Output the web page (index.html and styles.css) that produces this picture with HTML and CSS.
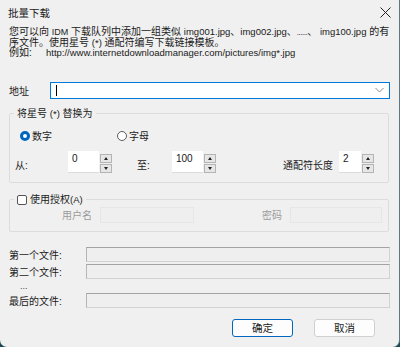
FILE: index.html
```html
<html>

<head>
  <title>批量下载</title>
  <link rel="stylesheet" href="styles.css">
</head>

<body>
  <div class="window">
    <header class="titlebar">
      <span class="title">批量下载</span>
      <svg class="close" width="11" height="11" viewBox="0 0 11 11">
        <path d="M0.5 0.5L10.5 10.5M10.5 0.5L0.5 10.5" />
      </svg>
    </header>

    <main class="content">
      <p class="desc">
        <span class="line">您可以向 <span class="idm">IDM</span> 下载队列中添加一组类似 <span class="en">img001.jpg</span>、<span class="en">img002.jpg</span>、<span class="ell">......</span>、 <span class="en">img100.jpg</span> 的有</span>
        <span class="line">序文件。使用星号 <span class="en">(*)</span> 通配符编写下载链接模板。</span>
        <span class="line"><span class="eg">例如:</span><span class="en">http://www.internetdownloadmanager.com/pictures/img*.jpg</span></span>
      </p>

      <div class="addr-row">
        <label>地址</label>
        <div class="combo">
          <span class="caret"></span>
          <svg class="chevron" width="9" height="6" viewBox="0 0 9 6">
            <path d="M0.5 1L4.5 5L8.5 1" />
          </svg>
        </div>
      </div>

      <fieldset class="group group-replace">
        <legend>将星号 <span class="en">(*)</span> 替换为</legend>
        <div class="radio-row">
          <span class="radio checked">数字</span>
          <span class="radio">字母</span>
        </div>
        <div class="spin-row">
          <label class="lbl-from">从:</label>
          <div class="spin spin-from">
            <span class="spin-value">0</span>
            <span class="spin-btns"><i class="up"></i><i class="down"></i></span>
          </div>
          <label class="lbl-to">至:</label>
          <div class="spin spin-to">
            <span class="spin-value">100</span>
            <span class="spin-btns"><i class="up"></i><i class="down"></i></span>
          </div>
          <label class="lbl-len">通配符长度</label>
          <div class="spin spin-len">
            <span class="spin-value">2</span>
            <span class="spin-btns"><i class="up"></i><i class="down"></i></span>
          </div>
        </div>
      </fieldset>

      <fieldset class="group group-auth">
        <legend><span class="check"></span>使用授权<span class="en">(A)</span></legend>
        <div class="auth-row">
          <label class="lbl-user">用户名</label>
          <span class="field-off user"></span>
          <label class="lbl-pass">密码</label>
          <span class="field-off pass"></span>
        </div>
      </fieldset>

      <div class="files">
        <label>第一个文件:</label>
        <span class="field-ro"></span>
        <label>第二个文件:</label>
        <span class="field-ro"></span>
        <span class="dots">...</span>
        <span></span>
        <label>最后的文件:</label>
        <span class="field-ro"></span>
      </div>

      <div class="buttons">
        <button class="btn default">确定</button>
        <button class="btn">取消</button>
      </div>
    </main>
  </div>
</body>

</html>
```

FILE: styles.css
```css
:root {
  --bg: #f0f0f0;
  --text: #1a1a1a;
  --muted: #9b9b9b;
  --accent: #0067c0;
  --group-line: #dcdcdc;
}

body {
  margin: 0;
  background-color: #1c4756;
  font-family: "Liberation Sans", "Noto Sans CJK SC", sans-serif;
  font-size: 10px;
  color: var(--text);
}

.en {
  font-size: 9.5px;
}

.window {
  width: 399px;
  height: 347px;
  background-color: var(--bg);
  border-right: 1px solid #5d7883;
  border-radius: 0 0 7px 7px;
  overflow: hidden;
}

.titlebar {
  display: flex;
  align-items: center;
  justify-content: space-between;
  height: 24px;
  padding: 0 8px 0 8px;
}

.title {
  font-size: 10.5px;
}

.close {
  stroke: #222;
  stroke-width: 1;
  fill: none;
}

.content {
  padding: 0 9px 0 9px;
}

.desc {
  margin: 3px 0 0 0;
  line-height: 10.5px;
}

.desc .line {
  display: block;
  white-space: nowrap;
  height: 10.5px;
}

.desc .idm {
  font-size: 9px;
}

.desc .ell {
  font-size: 8px;
  letter-spacing: -0.5px;
}

.desc .eg {
  display: inline-block;
  width: 37px;
}

.addr-row {
  display: grid;
  grid-template-columns: 41px 1fr;
  align-items: center;
  margin-top: 23px;
  width: 381px;
}

.combo {
  display: flex;
  align-items: center;
  justify-content: space-between;
  height: 15px;
  background-color: #fff;
  border: 1px solid #0078d7;
  padding: 0 5px 0 5px;
}

.caret {
  width: 1px;
  height: 11px;
  background-color: #000;
}

.chevron {
  stroke: #8a8a8a;
  fill: none;
}

.group {
  margin: 9px 0 0 0;
  padding: 0 0 0 0;
  border: 1px solid var(--group-line);
  border-radius: 2px;
  width: 380px;
  box-sizing: border-box;
}

.group legend {
  margin-left: 4px;
  padding: 0 3px 0 3px;
  line-height: 12px;
  display: flex;
  align-items: center;
  white-space: pre;
}

.group-replace {
  height: 75px;
}

.radio-row {
  display: flex;
  align-items: center;
  height: 12px;
  margin-top: 10px;
  padding-left: 10px;
}

.radio {
  display: flex;
  align-items: center;
  width: 97px;
}

.radio::before {
  content: "";
  box-sizing: border-box;
  width: 10px;
  height: 10px;
  border-radius: 50%;
  border: 1px solid #5c5c5c;
  background-color: #fff;
  margin-right: 2px;
}

.radio.checked::before {
  border: 3px solid var(--accent);
}

.spin-row {
  display: flex;
  align-items: center;
  margin-top: 9px;
  height: 22px;
}

.spin-row label {
  padding-top: 5px;
}

.lbl-from {
  margin-left: 5px;
  width: 53px;
}

.lbl-to {
  margin-left: 25px;
  width: 35px;
}

.lbl-len {
  margin-left: 67px;
  width: 56px;
}

.spin {
  display: flex;
  height: 22px;
}

.spin-value {
  box-sizing: border-box;
  background-color: #fff;
  border-bottom: 1px solid #dcdcdc;
  padding: 2px 0 0 4px;
  font-size: 10px;
  line-height: 12px;
}

.spin-from .spin-value,
.spin-to .spin-value {
  width: 31px;
}

.spin-len .spin-value {
  width: 22px;
}

.spin-btns {
  display: flex;
  flex-direction: column;
  gap: 1px;
  margin: 3px 0 0 1px;
}

.spin-btns i {
  box-sizing: border-box;
  display: flex;
  align-items: center;
  justify-content: center;
  width: 12px;
  height: 9px;
  background-color: #e6e6e6;
  border: 1px solid #b4b4b4;
}

.spin-btns i::after {
  content: "";
  border-left: 2.5px solid transparent;
  border-right: 2.5px solid transparent;
}

.spin-btns .up::after {
  border-bottom: 3px solid #222;
}

.spin-btns .down::after {
  border-top: 3px solid #222;
}

.group-auth {
  margin-top: 11px;
  height: 38px;
}

.check {
  box-sizing: border-box;
  width: 10px;
  height: 10px;
  border: 1px solid #555;
  border-radius: 2px;
  background-color: #fff;
  margin-right: 3px;
}

.auth-row {
  display: flex;
  align-items: center;
  margin-top: 1px;
  height: 16px;
  color: var(--muted);
}

.lbl-user {
  margin-left: 52px;
  width: 38px;
}

.lbl-pass {
  margin-left: 68px;
  width: 28px;
}

.field-off {
  box-sizing: border-box;
  height: 16px;
  border: 1px solid #e6e6e6;
  background-color: #efefef;
}

.field-off.user {
  width: 94px;
}

.field-off.pass {
  width: 92px;
}

.files {
  display: grid;
  grid-template-columns: 77px 304px;
  grid-template-rows: 15px 15px 10px 15px;
  row-gap: 2px;
  align-items: center;
  margin-top: 15px;
}

.field-ro {
  box-sizing: border-box;
  height: 15px;
  background-color: #efefef;
  border: 1px solid #d2d2d2;
  border-top: 1px solid #a3a3a3;
  border-left: 1px solid #b5b5b5;
}

.dots {
  padding-left: 11px;
  line-height: 8px;
  font-size: 9px;
  color: #444;
}

.buttons {
  display: flex;
  justify-content: flex-end;
  gap: 21px;
  margin-top: 11px;
  padding-right: 15px;
}

.btn {
  box-sizing: border-box;
  width: 61px;
  height: 18px;
  padding: 0;
  font-family: inherit;
  font-size: 10.5px;
  color: var(--text);
  background-color: #fdfdfd;
  border: 1px solid #d0d0d0;
  border-radius: 3px;
}

.btn.default {
  border: 1px solid var(--accent);
}
```
